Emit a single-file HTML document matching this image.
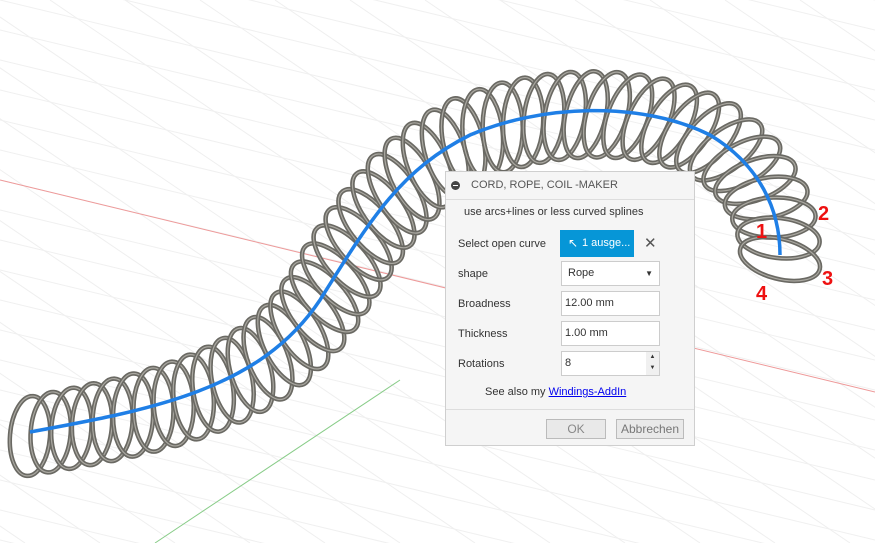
<!DOCTYPE html>
<html><head><meta charset="utf-8"><style>
html,body{margin:0;width:875px;height:543px;overflow:hidden}
body{background:#fff;font-family:"Liberation Sans",sans-serif;position:relative}
svg{position:absolute;left:0;top:0}
.dlg{position:absolute;left:445px;top:171px;width:248px;height:273px;background:#f5f5f5;border:1px solid #cfcfcf;font-size:11px;color:#333}
.title{height:27px;border-bottom:1px solid #ddd;line-height:27px;padding-left:25px;color:#555;position:relative}
.title:before{content:"";position:absolute;left:5px;top:9px;width:9px;height:9px;border-radius:50%;background:#444}
.title:after{content:"";position:absolute;left:7px;top:13px;width:5px;height:1px;background:#fff}
.row{position:absolute;left:12px}
.box{position:absolute;left:115px;width:99px;height:23px;background:#fff;border:1px solid #ccc;box-sizing:border-box;line-height:21px;padding-left:3px}
.foot{position:absolute;left:0;top:237px;width:248px;height:36px;border-top:1px solid #ddd}
.btn{position:absolute;top:9px;height:18px;border:1px solid #bbb;background:#e9e9e9;text-align:center;line-height:18px;font-size:12px;color:#888}
</style></head><body>
<svg id="s" width="875" height="543"></svg>
<div class="dlg">
<div class="title">CORD, ROPE, COIL -MAKER</div>
<div class="row" style="top:34px;left:18px">use arcs+lines or less curved splines</div>
<div class="row" style="top:66px">Select open curve</div>
<div style="position:absolute;left:114px;top:58px;width:74px;height:27px;background:#0696d7;color:#fff;line-height:27px;padding-left:22px;box-sizing:border-box">1 ausge...</div>
<div style="position:absolute;left:122px;top:64px;color:#fff;font-size:12px">&#x2196;</div>
<div style="position:absolute;left:198px;top:62px;font-size:15px;color:#555">✕</div>
<div class="row" style="top:96px">shape</div>
<div class="box" style="top:89px;height:25px;line-height:23px;padding-left:6px">Rope<span style="position:absolute;right:6px;font-size:8px">▼</span></div>
<div class="row" style="top:126px">Broadness</div>
<div class="box" style="top:119px;height:25px;line-height:23px">12.00 mm</div>
<div class="row" style="top:156px">Thickness</div>
<div class="box" style="top:149px;height:25px;line-height:23px">1.00 mm</div>
<div class="row" style="top:186px">Rotations</div>
<div class="box" style="top:179px;height:25px;line-height:23px">8<span style="position:absolute;right:0;top:0;width:13px;height:23px;background:#f0f0f0;font-size:6px;line-height:11px;text-align:center">▲<br>▼</span></div>
<div class="row" style="top:214px;left:39px">See also my <span style="color:#00e;text-decoration:underline">Windings-AddIn</span></div>
<div class="foot"><div class="btn" style="left:100px;width:58px">OK</div><div class="btn" style="left:170px;width:66px;color:#777">Abbrechen</div></div>
</div>
<script>
var s=document.getElementById('s'),NS='http://www.w3.org/2000/svg';
function el(t,a){var e=document.createElementNS(NS,t);for(var k in a)e.setAttribute(k,a[k]);s.appendChild(e);return e}
for(var i=-20;i<30;i++){el('line',{x1:i*75-400,y1:0,x2:i*75+400,y2:543,stroke:'#efefef','stroke-width':1});
el('line',{x1:0,y1:i*30-300,x2:875,y2:i*30-300+210,stroke:'#f0f0f0','stroke-width':1});}
el('line',{x1:0,y1:180,x2:875,y2:392,stroke:'#e99','stroke-width':1});
el('line',{x1:155,y1:543,x2:400,y2:380,stroke:'#8c8','stroke-width':1});
var d="M30 432 C150 410 260 390 320 300 C370 220 400 170 470 135 C540 105 640 100 710 135 C760 165 780 210 780 255";
var p=el('path',{d:d,fill:'none',stroke:'none'});
var L=p.getTotalLength(),n=46;
for(var k=0;k<n;k++){var t=L*k/(n-1),a=p.getPointAtLength(t),b=p.getPointAtLength(Math.min(L,t+2)),c=p.getPointAtLength(Math.max(0,t-2));
var ang=Math.atan2(b.y-c.y,b.x-c.x)*180/Math.PI;var ry=40+5*Math.sin(k/n*3);var rx=20;
var cx=a.x,cy=a.y+4;
var tr='rotate('+(ang+15)+' '+cx+' '+cy+')';
el('ellipse',{cx:cx,cy:cy,rx:rx,ry:ry,transform:tr,fill:'none',stroke:'#6a6963','stroke-width':4.5});
el('ellipse',{cx:cx,cy:cy,rx:rx,ry:ry,transform:tr,fill:'none',stroke:'#aaa8a1','stroke-width':1.2});}
el('path',{d:d,fill:'none',stroke:'#1f7fe6','stroke-width':3.5});
el('ellipse',{cx:568,cy:272,rx:27,ry:12,fill:'none',stroke:'#e11','stroke-width':2.5});
var nums=[[756,238,'1'],[818,220,'2'],[822,285,'3'],[756,300,'4']];
nums.forEach(function(q){var t=el('text',{x:q[0],y:q[1],fill:'#e11','font-size':20,'font-weight':'bold','font-family':'Liberation Sans'});t.textContent=q[2];});
</script>
</body></html>
